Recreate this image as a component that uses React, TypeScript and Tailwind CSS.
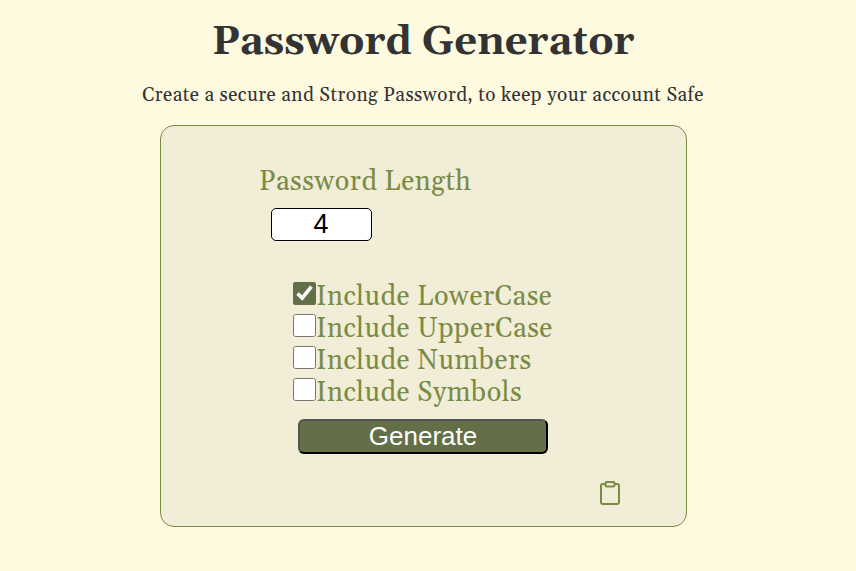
import { useState } from "react";

const options = ["LowerCase", "UpperCase", "Numbers", "Symbols"];

function Option({ name, initial }: { name: string; initial: boolean }) {
  const [checked, setChecked] = useState(initial);
  return (
    <label className="flex h-8 items-start text-[27px] leading-8">
      <input
        type="checkbox"
        checked={checked}
        onChange={() => setChecked(!checked)}
        className="m-0 mt-px h-[23px] w-[23px] shrink-0 accent-[#626f47]"
      />
      <span className="pl-[0.5px] tracking-[0.52px] whitespace-nowrap">Include {name}</span>
    </label>
  );
}

function ClipboardIcon() {
  return (
    <svg viewBox="0 0 20 24" className="h-6 w-5" fill="none" stroke="currentColor" strokeWidth="2" strokeLinejoin="round">
      <path d="M5.500 3H3A2 2 0 0 0 1 5v16a2 2 0 0 0 2 2h14a2 2 0 0 0 2-2V5a2 2 0 0 0-2-2h-2.500" />
      <rect x="5.500" y="1" width="9" height="4.600" rx="1.300" />
    </svg>
  );
}

export default function App() {
  return (
    <main className="flex h-[571px] flex-col items-center bg-[#fefae0] pr-[10px] font-[Georgia,Gelasio,'DejaVu_Serif',serif] text-[#333333]">
      <h1 className="mt-[19px] h-12 whitespace-nowrap text-[40px] leading-[48px] font-bold">Password Generator</h1>
      <p className="mt-4 h-6 whitespace-nowrap text-[19px] leading-6 tracking-[0.46px]">Create a secure and Strong Password, to keep your account Safe</p>
      <section className="mt-[18px] flex h-[402px] w-[527px] flex-col rounded-[14px] border border-[#7a8b46] bg-[#f2edd7] text-[#7a8b46]">
        <label htmlFor="length" className="mt-10 ml-[98.5px] h-8 whitespace-nowrap text-[27px] leading-8 tracking-[0.5px]">Password Length</label>
        <input id="length" defaultValue="4" className="mt-[10px] ml-[110px] h-[33px] w-[101px] rounded-[5px] border border-black bg-white text-center font-['Liberation_Sans',sans-serif] text-[27px] text-black" />
        <div className="mt-10 ml-[132px] flex flex-col">
          {options.map((name, i) => <Option key={name} name={name} initial={i === 0} />)}
        </div>
        <button className="mt-[10px] ml-[137px] h-[35px] w-[250px] rounded-[6px] border-2 border-black bg-[#626f47] pl-px pb-0.5 font-['Liberation_Sans',sans-serif] text-[26px] leading-none text-white [border-style:outset]">Generate</button>
        <button aria-label="Copy password" className="mt-[27px] mr-[66px] self-end">
          <ClipboardIcon />
        </button>
      </section>
    </main>
  );
}
